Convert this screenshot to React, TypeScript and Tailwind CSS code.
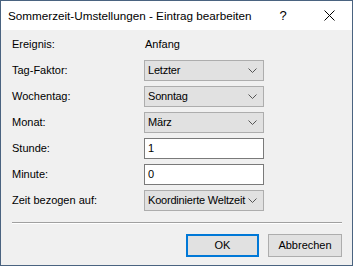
import React from 'react';

const font = { fontFamily: '"Liberation Sans", Arial, sans-serif' };

function Chevron() {
    return (
        <svg width="9" height="5" viewBox="0 0 9 5" className="shrink-0">
            <path d="M0.5 0.5 L4.5 4.5 L8.5 0.5" fill="none" stroke="#555" strokeWidth="1" />
        </svg>
    );
}

function Select({ value }: { value: string }) {
    return (
        <div className="w-[120px] h-[21px] bg-[#e1e1e1] border border-[#adadad] flex items-center justify-between pl-[3px] pr-[6px]">
            <span className="text-[11px] tracking-[-0.2px] text-black leading-none whitespace-nowrap">{value}</span>
            <Chevron />
        </div>
    );
}

function Input({ value }: { value: string }) {
    return (
        <div className="w-[120px] h-[21px] bg-white border border-[#7a7a7a] flex items-center pl-[3px]">
            <span className="text-[11px] text-black leading-none">{value}</span>
        </div>
    );
}

const rows: { label: string; control: React.ReactNode }[] = [
    { label: 'Ereignis:', control: <span className="text-[11px] pl-[1px]">Anfang</span> },
    { label: 'Tag-Faktor:', control: <Select value="Letzter" /> },
    { label: 'Wochentag:', control: <Select value="Sonntag" /> },
    { label: 'Monat:', control: <Select value="März" /> },
    { label: 'Stunde:', control: <Input value="1" /> },
    { label: 'Minute:', control: <Input value="0" /> },
    { label: 'Zeit bezogen auf:', control: <Select value="Koordinierte Weltzeit" /> },
];

export default function App() {
    return (
        <div className="w-[353px] h-[266px] border border-[#4a6380] flex flex-col bg-[#f0f0f0] text-black" style={font}>
            {/* Title bar */}
            <div className="h-[29px] bg-white flex items-center shrink-0">
                <span className="pl-[7px] text-[11.7px] whitespace-nowrap">Sommerzeit-Umstellungen - Eintrag bearbeiten</span>
                <span className="ml-auto w-[46px] text-center text-[13px]">?</span>
                <div className="w-[46px] flex justify-center mr-[0px]">
                    <svg width="11" height="11" viewBox="0 0 11 11">
                        <path d="M0.5 0.5 L10.5 10.5 M10.5 0.5 L0.5 10.5" stroke="#000" strokeWidth="1" />
                    </svg>
                </div>
            </div>

            {/* Body */}
            <div className="flex flex-col pt-[4px] pl-[11px] pr-[10px]">
                <div className="flex flex-col gap-[5px]">
                    {rows.map((r, i) => (
                        <div key={i} className="h-[21px] flex items-center">
                            <span className="w-[132px] text-[11px] whitespace-nowrap">{r.label}</span>
                            {r.control}
                        </div>
                    ))}
                </div>

                <div className="mt-[11px] border-t border-[#a0a0a0] border-b border-b-white" />

                <div className="mt-[10px] flex justify-end gap-[9px]">
                    <button className="w-[73px] h-[23px] bg-[#e1e1e1] border-2 border-[#0078d7] text-[11px]">OK</button>
                    <button className="w-[74px] h-[23px] bg-[#e1e1e1] border border-[#adadad] text-[11px]">Abbrechen</button>
                </div>
            </div>
        </div>
    );
}
